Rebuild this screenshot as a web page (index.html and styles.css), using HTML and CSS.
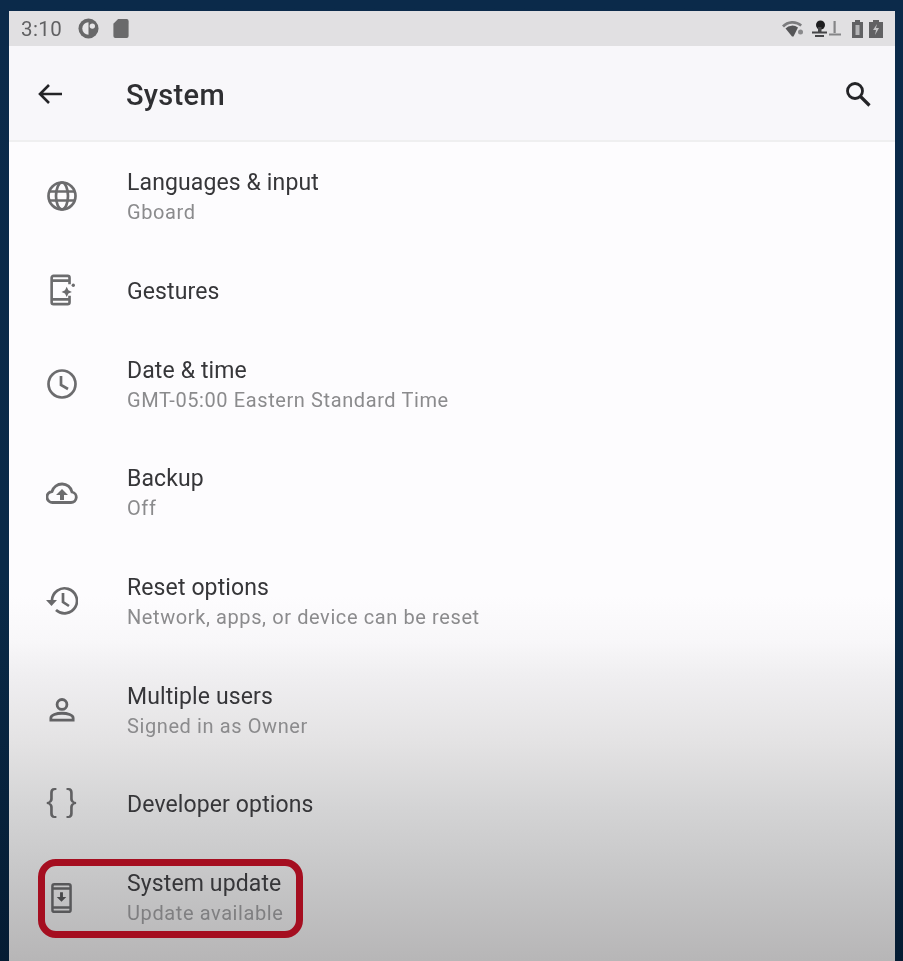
FILE: index.html
```html
<!DOCTYPE html>
<html lang="en">
<head>
<meta charset="utf-8">
<title>System</title>
<link rel="stylesheet" href="styles.css">
</head>
<body>
<main class="screen">
  <header class="status">
    <div class="status-left">
      <span class="clock">3:10</span>
      <svg class="st-a" viewBox="0 0 22 22"><circle cx="11" cy="11" r="10.500" fill="#686869"/><path d="M11 4.500a6.500 6.500 0 0 0 0 13z" fill="#e6e5e7"/><circle cx="15" cy="8.500" r="2.800" fill="#e6e5e7"/></svg>
      <svg class="st-b" viewBox="0 0 16 20"><path d="M5 0h9a2 2 0 0 1 2 2v16a2 2 0 0 1-2 2H2a2 2 0 0 1-2-2V5z" fill="#6a6a6b"/></svg>
    </div>
    <div class="status-right">
      <svg class="st-wifi" viewBox="0 0 22 17"><path d="M0 5.500a14.500 14.500 0 0 1 20-1l-1.500 2a12 12 0 0 0-16.500 1z" fill="#7c7c7e"/><path d="M3.500 8.500a9.500 9.500 0 0 1 12.500-1L11.500 16.500h-1.500z" fill="#555557"/><circle cx="18.500" cy="12" r="2.500" fill="#8a8a8c"/></svg>
      <svg class="st-ant" viewBox="0 0 30 17"><circle cx="9.500" cy="5" r="4.500" fill="#1d1d1f"/><path d="M7 7h3.500v6H7zM1 11.500h15v2H1zM4 15h9v2H4z" fill="#454547"/><path d="M22.500 1h2.200v12h-2.200zM18 13.500h12v2H18z" fill="#858587"/></svg>
      <svg class="st-bat" viewBox="0 0 11 18"><path d="M3 0h5v2h3v16H0V2h3z" fill="#616163"/><path d="M3.500 5h4v10h-4z" fill="#b4b4b6"/></svg>
      <svg class="st-bat2" viewBox="0 0 14 18"><path d="M4 0h6v2h4v16H0V2h4z" fill="#616163"/><path d="M8 4 4 10h3l-1 5 4-7H7z" fill="#c4c4c6"/></svg>
    </div>
  </header>
  <div class="appbar">
    <svg class="back" viewBox="0 0 26 24"><path d="M25 12H3M12 3l-9 9 9 9" fill="none" stroke="#242427" stroke-width="2.600"/></svg>
    <h1 class="title">System</h1>
    <svg class="search" viewBox="0 0 26 26"><circle cx="10" cy="10" r="7.500" fill="none" stroke="#242427" stroke-width="2.800"/><path d="M15.500 15.500l9 9" stroke="#242427" stroke-width="3.200"/></svg>
  </div>
  <ul class="list">
    <li class="row">
      <span class="icon"><svg viewBox="0 0 32 32"><g fill="none" stroke="#6c6c6e" stroke-width="2.700"><circle cx="16" cy="16" r="13.500"/><ellipse cx="16" cy="16" rx="6" ry="13.500"/><path d="M3.500 11.500h25M3.500 20.500h25"/></g></svg></span>
      <div class="text"><div class="name">Languages &amp; input</div><div class="sub">Gboard</div></div>
    </li>
    <li class="row single">
      <span class="icon"><svg viewBox="0 0 32 34"><g fill="none" stroke="#6c6c6e" stroke-width="2.800"><path d="M24 11V4a2 2 0 0 0-2-2H7a2 2 0 0 0-2 2v26a2 2 0 0 0 2 2h15a2 2 0 0 0 2-2v-7"/><path d="M5 7h19M5 27h19"/></g><path d="M21 13.500l1.800 3.700 3.700 1.800-3.700 1.800-1.800 3.700-1.800-3.700-3.700-1.800 3.700-1.800z" fill="#6c6c6e"/><circle cx="28" cy="12" r="1.800" fill="#6c6c6e"/></svg></span>
      <div class="text"><div class="name">Gestures</div></div>
    </li>
    <li class="row">
      <span class="icon"><svg viewBox="0 0 32 32"><g fill="none" stroke="#6c6c6e" stroke-width="2.700"><circle cx="16" cy="16" r="13.500"/><path d="M15 8v9l7 4"/></g></svg></span>
      <div class="text"><div class="name">Date &amp; time</div><div class="sub">GMT-05:00 Eastern Standard Time</div></div>
    </li>
    <li class="row">
      <span class="icon"><svg viewBox="0 0 32 24"><path d="M7 21.500a5.500 5.500 0 0 1-1-11A10.500 10.500 0 0 1 16 3a10 10 0 0 1 10 8 5.300 5.300 0 0 1-1 10.500z" fill="none" stroke="#6c6c6e" stroke-width="2.800"/><path d="M16 8l6 6h-4v5h-4v-5h-4z" fill="#6c6c6e"/></svg></span>
      <div class="text"><div class="name">Backup</div><div class="sub">Off</div></div>
    </li>
    <li class="row">
      <span class="icon"><svg viewBox="0 0 32 30"><g fill="none" stroke="#69696b" stroke-width="2.700"><path d="M6 14a12.500 12.500 0 1 1 4 10"/><path d="M17 7v9l6 4"/></g><path d="M0 14h11l-5.500 6z" fill="#69696b"/></svg></span>
      <div class="text"><div class="name">Reset options</div><div class="sub">Network, apps, or device can be reset</div></div>
    </li>
    <li class="row">
      <span class="icon"><svg class="person" viewBox="0 0 28 26"><g fill="none" stroke="#636365" stroke-width="3"><circle cx="14" cy="7" r="5.300"/><path d="M2 24v-2.500c0-3 6-5 12-5s12 2 12 5v2.500z"/></g></svg></span>
      <div class="text"><div class="name">Multiple users</div><div class="sub">Signed in as Owner</div></div>
    </li>
    <li class="row single">
      <span class="icon"><span class="braces">{ }</span></span>
      <div class="text"><div class="name">Developer options</div></div>
    </li>
    <li class="row update">
      <span class="icon"><svg class="phone" viewBox="0 0 22 32"><g fill="none" stroke="#58585a" stroke-width="2.600"><rect x="1.500" y="1.500" width="19" height="29" rx="2"/><path d="M1.500 6h19M1.500 26h19"/></g><path d="M9.500 10h3v5h3.500l-5 5-5-5h3.500z" fill="#48484a"/></svg></span>
      <div class="text"><div class="name">System update</div><div class="sub">Update available</div></div>
    </li>
  </ul>
</main>
</body>
</html>
```
FILE: styles.css
```css
* { box-sizing: border-box; }
html, body { margin: 0; height: 100%; }
body {
  background: linear-gradient(#0b2a4a, #0a2a48 60%, #051c33);
  padding: 11px 8px 0 9px;
  overflow: hidden;
  font-family: Roboto, "Liberation Sans", sans-serif;
}
.screen {
  height: 950px;
  overflow: hidden;
  background: linear-gradient(#fdfcfe 0, #fdfcfe 585px, #f8f7f9 630px, #f0eff1 662px, #e4e3e4 729px, #d4d4d5 796px, #c7c7c8 862px, #b7b6b7 949px);
  filter: blur(0.5px);
}
.status {
  height: 35px;
  background: #e1e0e2;
  display: flex;
  align-items: center;
  justify-content: space-between;
  padding: 0 12px 0 12px;
}
.status-left, .status-right { display: flex; align-items: center; }
.clock { font-size: 20.5px; color: #616163; letter-spacing: 0.4px; width: 46px; }
.st-a { width: 21px; height: 21px; margin-left: 11px; }
.st-b { width: 16px; height: 19px; margin-left: 14px; }
.st-wifi { width: 22px; height: 17px; }
.st-ant { width: 30px; height: 17px; margin-left: 7px; }
.st-bat { width: 11px; height: 18px; margin-left: 11px; }
.st-bat2 { width: 14px; height: 18px; margin-left: 6px; }
.appbar {
  height: 96px;
  background: #f8f7fa;
  border-bottom: 2px solid #efeff0;
  display: flex;
  align-items: center;
  padding: 2px 24px 0 28px;
}
.back { width: 26px; height: 24px; }
.title {
  flex: 1;
  margin: 2px 0 0 63px;
  font-size: 29px;
  font-weight: 500;
  letter-spacing: 0.3px;
  color: #2f2f32;
}
.search { width: 26px; height: 26px; }
.list { list-style: none; margin: 0; padding: 0; }
.row { height: 108.7px; display: flex; align-items: center; padding-left: 36px; }
.row.single { height: 79px; }
.icon { width: 33px; display: flex; justify-content: center; flex: none; }
.icon svg { width: 32px; height: 32px; }
.icon .person { width: 26px; }
.icon .phone { width: 21px; }
.text { margin-left: 49px; padding-top: 3px; }
.row:not(.single) .text { padding-top: 2px; }
.name { font-size: 23px; line-height: 30px; letter-spacing: 0.12px; color: #363639; }
.sub { font-size: 20px; line-height: 30px; letter-spacing: 0.6px; color: #8b8b8d; margin-top: -1px; }
.braces { font-size: 32px; line-height: 32px; color: #606062; font-family: "Liberation Sans", sans-serif; margin-top: -7px; }
.update { position: relative; }
.update .sub { color: #7f7f81; }
.update::after {
  content: "";
  box-sizing: border-box;
  position: absolute;
  left: 29px;
  top: 15.5px;
  width: 265px;
  height: 79px;
  border: 7px solid #a50e20;
  border-radius: 18px;
}
```
